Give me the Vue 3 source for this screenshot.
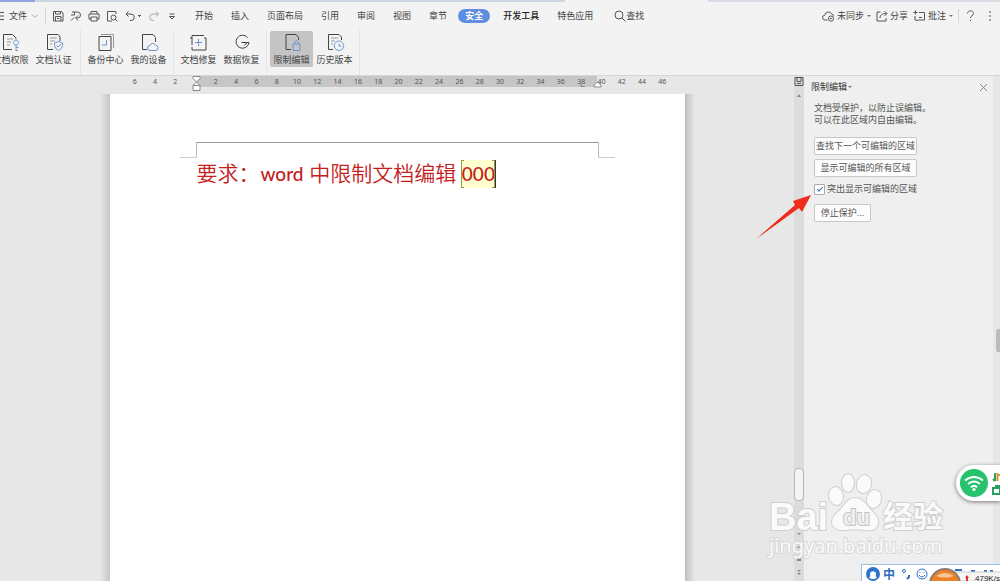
<template>
  <div class="app">
    <div class="tab-strip">
      <span class="tab-current"></span>
      <span class="tab-others"></span>
      <span class="tab-gap"></span>
      <span class="tab-rest"></span>
    </div>

    <header class="toolbar">
      <nav class="menu-bar">
        <button class="file-btn">
          <svg width="5" height="10" viewBox="0 0 5 10"><path d="M0 1.5h4M0 5h4M0 8.5h4" /></svg>
          <span>文件</span>
          <svg class="light" width="8" height="8" viewBox="0 0 8 8"><path d="M1 2.5l3 3 3-3" /></svg>
        </button>
        <div class="quick">
          <button v-for="q in quickIcons" :key="q.label" :aria-label="q.label" :class="{ light: q.light }">
            <svg :width="q.w" height="12" :viewBox="`0 0 ${q.w} 12`"><path :d="q.d" /></svg>
          </button>
        </div>
        <div class="tabs">
          <button
            v-for="tab in tabs"
            :key="tab"
            :class="{ active: tab === '安全', strong: tab === '开发工具' }"
          >{{ tab }}</button>
        </div>
        <button class="search">
          <svg width="12" height="12" viewBox="0 0 12 12"><circle cx="5" cy="5" r="4" /><path d="M8 8l3.5 3.5" /></svg>
          <span>查找</span>
        </button>
        <div class="account">
          <button>
            <svg width="13" height="12" viewBox="0 0 13 12">
              <path d="M5.5 10H3.2a2.4 2.4 0 0 1-.4-4.8A3.6 3.6 0 0 1 9.6 4a2.6 2.6 0 0 1 2 2.2" />
              <circle cx="9" cy="8.6" r="2.6" /><path d="M7.8 8.6h2.4" />
            </svg>
            <span>未同步</span><i class="caret"></i>
          </button>
          <button>
            <svg width="12" height="12" viewBox="0 0 12 12"><path d="M4.5 2H1v9h9V8M4 8c0-3 2-4.500 6.500-4.500M8.500 1l2.500 2.500-2.500 2.500" /></svg>
            <span>分享</span>
          </button>
          <button>
            <svg width="13" height="12" viewBox="0 0 13 12"><path d="M6 2.500h5.500v7.500H5.500L4 11l-.5-1H2V6M.5 2.500h4M2.500.5v4M6 7.500h3" /></svg>
            <span>批注</span><i class="caret"></i>
          </button>
          <span class="divider"></span>
          <button class="help" aria-label="帮助">
            <svg width="9" height="12" viewBox="0 0 9 12"><path d="M1.500 3.500C1.500 0 7.500 0 7.500 3.500c0 2-3 2.200-3 4.500M4.500 9.800v1.200" /></svg>
          </button>
          <button aria-label="更多">
            <svg width="4" height="12" viewBox="0 0 4 12"><path d="M2 1v2M2 5v2M2 9v2" /></svg>
          </button>
        </div>
      </nav>

      <div class="ribbon">
        <div v-for="(group, i) in ribbon" :key="i" class="ribbon-group">
          <button v-for="item in group" :key="item.label" :class="{ pressed: item.pressed }">
            <svg width="20" height="19" viewBox="0 0 20 19">
              <path v-if="item.thin" class="thin" :d="item.thin" />
              <path :d="item.dark" />
              <path class="blue" :d="item.blue" />
            </svg>
            <span>{{ item.label }}</span>
          </button>
        </div>
      </div>
    </header>

    <main class="workspace">
      <section class="document">
        <div class="ruler">
          <div class="ruler-band">
            <svg class="indent-left" width="9" height="16" viewBox="0 0 9 16">
              <path d="M1 .5h7v2L4.500 6 1 2.500zM4.500 6L8 9.500H1zM1 9.500h7v5H1z" />
            </svg>
            <svg class="indent-tab" width="5" height="5" viewBox="0 0 5 5"><path d="M1 0v3.500h4" /></svg>
            <svg class="indent-right" width="9" height="7" viewBox="0 0 9 7"><path d="M4.500 1L8 4v2H1V4z" /></svg>
          </div>
          <div class="ruler-ticks">
            <span v-for="(n, i) in ticks" :key="i">{{ n }}</span>
          </div>
        </div>
        <div class="sheet-wrap">
          <article class="sheet">
            <div class="margins">
              <span class="corner left"></span>
              <span class="line"></span>
              <span class="corner right"></span>
            </div>
            <p class="body-text">要求：<span class="latin">word</span> 中限制文档编辑 <mark class="latin">000</mark></p>
          </article>
        </div>
      </section>

      <div class="scrollbar">
        <svg width="10" height="12" viewBox="0 0 10 12"><path d="M1 1.500h8v8H1zM3 1.500v4h4v-4M3 7.500h4" /></svg>
        <i class="up"></i>
        <span class="thumb"></span>
        <svg class="jump" width="10" height="52" viewBox="0 0 10 52">
          <path d="M3 4h4l-2 2zM3 16l2-2 2 2zM3 19l2-2 2 2zM3 28h4v4H3zM3 41h4l-2 2zM3 44h4l-2 2z" />
        </svg>
      </div>

      <aside class="panel">
        <div class="panel-head">
          <span>限制编辑</span><i class="caret"></i>
          <button aria-label="关闭">
            <svg width="9" height="9" viewBox="0 0 9 9"><path d="M1 1l7 7M8 1l-7 7" /></svg>
          </button>
        </div>
        <p>文档受保护，以防止误编辑。<br />可以在此区域内自由编辑。</p>
        <button class="wide">查找下一个可编辑的区域</button>
        <button class="wide">显示可编辑的所有区域</button>
        <label for="highlight">
          <input id="highlight" v-model="highlight" type="checkbox" />
          <span>突出显示可编辑的区域</span>
        </label>
        <button class="stop">停止保护...</button>
        <svg class="pointer" width="58" height="46" viewBox="0 0 58 46">
          <path d="M1 45L40 11l-2-4L56 1l-9 17-3-4z" />
        </svg>
      </aside>
      <div class="edge"><span></span></div>
    </main>

    <svg class="watermark" width="184" height="90" viewBox="0 0 184 90">
      <text class="wm-bai" x="3" y="60">Bai</text>
      <ellipse cx="70" cy="26" rx="7" ry="9" transform="rotate(-12 70 26)" />
      <ellipse cx="82" cy="13" rx="6" ry="9" />
      <ellipse cx="98" cy="14" rx="7" ry="9" transform="rotate(12 98 14)" />
      <ellipse cx="108" cy="29" rx="7" ry="9" transform="rotate(15 108 29)" />
      <path d="M89 28c7 0 11 6 15 11 5 5 9 9 8 14-1 7-7 8-13 7-7-1-13-1-20 0-7 1-13-2-13-8 0-6 5-9 9-13 4-5 7-11 14-11z" />
      <text class="wm-du" x="77" y="55">du</text>
      <text class="wm-cjk" x="117" y="57">经验</text>
      <text class="wm-url" x="3" y="83">jingyan.baidu.com</text>
    </svg>

    <div class="wifi">
      <svg width="28" height="28" viewBox="0 0 28 28">
        <circle cx="14" cy="14" r="14" />
        <path d="M5 11.500q9-7 18 0M8 15q6-5 12 0M10.800 18.200q3.200-2.600 6.400 0" />
        <circle class="dot" cx="14" cy="20.500" r="1.600" />
      </svg>
      <svg width="8" height="26" viewBox="0 0 8 26">
        <path class="green" d="M3 3v8M1 9l2 2M1 18h7v6H1zM3 16h5" />
        <path class="orange" d="M5.500 3v8M5.500 5h3" />
      </svg>
    </div>

    <div class="ime">
      <svg width="140" height="16" viewBox="0 0 140 16">
        <circle class="solid" cx="11" cy="9" r="7" />
        <path class="face" d="M7 13q2-2 1-5a3.500 3.500 0 0 1 6 0q-1 3 1 5-4 2-8 0z" />
        <text class="ime-cn" x="21" y="14">中</text>
        <circle class="ring" cx="42" cy="6" r="1.500" />
        <path class="ring thick" d="M47 10v2l-2 2" />
        <circle class="ring" cx="60" cy="9" r="5" />
        <path class="ring" d="M58 7v1M62 7v1M57 10q3 4 6 0" />
        <path class="ring thick" d="M93 5h7M109 6h4M122 6h3M128 6h3" />
        <path class="tip" d="M84 7h56v9H84z" />
        <circle class="ball" cx="83" cy="19" r="15" />
        <path class="shine" d="M74 11q9-6 18 0-9 3-18 0z" />
        <path class="red" d="M105 10l-2 3h1v3h2v-3h1z" />
        <text class="speed" x="113" y="16">479K/s</text>
      </svg>
    </div>
  </div>
</template>

<script setup>
import { ref } from "vue";

const highlight = ref(true);

const tabs = ["开始", "插入", "页面布局", "引用", "审阅", "视图", "章节", "安全", "开发工具", "特色应用"];

const quickIcons = [
  { label: "保存", w: 12, d: "M1.500 1.500h8l1.500 1.500v8H1.500zM3.500 1.500v2.500h5V1.500M3.500 11V6.500h5.500V11M5 8.500h2.500" },
  { label: "输出", w: 12, d: "M2 2h5.500a2.500 2.500 0 0 1 0 6H6M8 5.500L5.500 8 8 10.500M1 5h3.500V2M1 10.500l3-3" },
  { label: "打印", w: 12, d: "M3 4V1.500h6V4M3 9H1V4h10v5H9M3 7h6v4H3z" },
  { label: "打印预览", w: 12, d: "M10 4V1.500H1.500V11H6M10.500 10.500L9.300 9.200M10 7.500a2.500 2.500 0 1 1-5 0 2.500 2.500 0 0 1 5 0M11.500 11.500L9.500 9.500" },
  { label: "撤销", w: 18, d: "M4.500 1.500L2 4l2.500 2.500M2 4h5a3 3 0 0 1 0 6.500H6M14 5.500h3M15 6.500h1" },
  { label: "恢复", w: 12, light: true, d: "M8 1.500L10.500 4 8 6.500M10.500 4H5a3 3 0 0 0 0 6.500h1" },
  { label: "自定义", w: 12, d: "M3.500 4h5M3.500 6.500h5L6 9z" },
];

const ribbon = [
  [
    { label: "文档权限", thin: "M6 6h6M6 9h4M6 12h3", dark: "M11 16.500H2.500v-15h9L15 5v1", blue: "M15 7a2.500 2.500 0 1 0 .1 0M15 12v6M15 14.500h2.500M15 17.500h2" },
    { label: "文档认证", thin: "M6 5h7M6 8h5M6 11h2", dark: "M9 16.500H3.500v-15H14L16 4v4", blue: "M14.500 8.500l4 1.500v2.500q0 3-4 5-4-2-4-5V10zM12.500 12.500l1.500 1.500 3-3" },
  ],
  [
    { label: "备份中心", thin: "M5 1.500h12.500V15", dark: "M3 3.500h12v14H3z", blue: "M10.500 7v5H6" },
    { label: "我的设备", dark: "M8 16.500H3.500v-15H14l2.500 3V9", blue: "M11 17.500a2.500 2.500 0 0 1 0-5 3 3 0 0 1 5.500-.5 2.800 2.800 0 0 1 .5 5.500z" },
  ],
  [
    { label: "文档修复", dark: "M3 12V2.500h12M17 5v12M17 5h-2M3 14v3h12M1 5h2M17 17h-2", blue: "M9.500 6v7M6 9.500h7" },
    { label: "数据恢复", dark: "M15.500 4.500A6.500 6.500 0 1 0 17 9.500H9.500M10 9.500h5l-2.500 3" },
  ],
  [
    { label: "限制编辑", pressed: true, dark: "M9 16.500H4v-15h10l2.500 3V7", blue: "M11 11h7v6.500h-7zM12.500 11V9q2-3 4 0v2" },
    { label: "历史版本", thin: "M6 5h7M6 8h4M6 11h2", dark: "M8 16.500H3.500v-15H14L16.500 4v3", blue: "M14 8a4.700 4.700 0 1 0 .1 0M14 10.500V13h2.500" },
  ],
];

// left side counts down to the page margin, then the text area counts up
const ticks = [6, 4, 2, ""];
for (let n = 2; n <= 46; n += 2) ticks.push(n);
</script>

<style>
body {
  margin: 0;
}
</style>

<style scoped>
.app {
  position: relative;
  display: flex;
  flex-direction: column;
  min-height: 100vh;
  overflow: hidden;
  background: #e7e7e7;
  color: #444;
  font: 9px/12px "Liberation Sans", "Noto Sans CJK SC", sans-serif;
}

button {
  padding: 0;
  border: 0;
  background: none;
  color: inherit;
  font: inherit;
  white-space: nowrap;
}

svg {
  flex: none;
  fill: none;
  stroke: #555;
}

.light,
.light svg {
  stroke: #aaa;
}

.tab-strip {
  display: flex;
  height: 2px;
  background: #f3f3f3;
}

.tab-current {
  flex: 35;
  background: #8fa5df;
}

.tab-others {
  flex: 530;
  background: #cfd6e1;
}

.tab-gap {
  flex: 143;
}

.tab-rest {
  flex: 292;
  background: #d8dde7;
}

.toolbar {
  background: #f3f3f3;
  border-bottom: 1px solid #d6d6d6;
}

.menu-bar {
  display: flex;
  align-items: center;
  height: 28px;
}

.menu-bar button {
  display: flex;
  align-items: center;
}

.file-btn {
  gap: 4px;
  height: 18px;
  padding-right: 6px;
  border-right: 1px solid #d5d5d5;
}

.quick {
  display: flex;
  gap: 6px;
  margin-left: 6px;
}

.tabs {
  display: flex;
  gap: 4px;
  margin-left: 10px;
}

.menu-bar .tabs button {
  height: 14px;
  padding: 0 7px;
  border-radius: 7px;
}

.menu-bar .tabs .active {
  margin-right: 2px;
  background: #5f8ee0;
  color: #fff;
  font-weight: bold;
}

.tabs .strong {
  color: #222;
  font-weight: 500;
}

.search {
  margin-left: 14px;
}

.account {
  display: flex;
  align-items: center;
  gap: 5px;
  margin-left: auto;
  padding-right: 8px;
}

.account button {
  gap: 2px;
}

.divider {
  width: 1px;
  height: 14px;
  background: #d5d5d5;
}

.help {
  margin: 0 8px 0 2px;
}

.caret {
  width: 0;
  margin-left: 1px;
  border: 2px solid transparent;
  border-top-color: #777;
  border-bottom: 0;
}

.ribbon {
  display: flex;
  height: 45px;
  margin-left: -14px;
}

.ribbon-group {
  display: flex;
  align-items: flex-start;
  padding: 0 3px;
  border-right: 1px solid #e4e4e4;
}

.ribbon-group:first-child {
  padding-right: 5px;
}

.ribbon-group button {
  display: flex;
  flex-direction: column;
  align-items: center;
  gap: 2px;
  width: 43px;
  margin-top: 1px;
  padding: 2px 0 1px;
  border-radius: 2px;
}

.ribbon-group .pressed {
  background: #c4c4c4;
}

.ribbon svg {
  stroke: #444;
}

.ribbon .thin {
  stroke: #999;
}

.ribbon .blue {
  stroke: #6b95cf;
}

.workspace {
  display: flex;
  flex: 1;
}

.document {
  display: flex;
  flex: 1;
  flex-direction: column;
}

.ruler {
  display: grid;
  justify-items: center;
  height: 18px;
}

.ruler > * {
  grid-area: 1 / 1;
}

.ruler-band {
  position: relative;
  width: 400px;
  height: 11px;
  background: #c6c6c6;
}

.ruler-band svg {
  position: absolute;
  stroke: #888;
}

.indent-left {
  top: 0;
  left: -5px;
  fill: #fff;
}

.indent-tab {
  right: 12px;
  bottom: -1px;
}

.indent-right {
  right: -5px;
  bottom: -1px;
  fill: #fff;
}

.ruler-ticks {
  position: relative;
  display: grid;
  grid-template-columns: repeat(27, 1fr);
  width: 548px;
  padding-left: 3px;
  color: #555;
  font: 7px/11px "Noto Sans", sans-serif;
  text-align: center;
}

.sheet-wrap {
  display: flex;
  flex: 1;
  justify-content: center;
}

.sheet-wrap::before,
.sheet-wrap::after {
  width: 10px;
  background: linear-gradient(to left, #c6c6c6, #e7e7e7);
  content: "";
}

.sheet-wrap::after {
  background: linear-gradient(to right, #c0c0c0, #e7e7e7);
}

.sheet {
  box-sizing: border-box;
  width: 575px;
  padding: 48px 70px 0;
  background: #fff;
}

.margins {
  display: flex;
  height: 16px;
}

.corner {
  box-sizing: border-box;
  width: 17px;
  border-bottom: 1px solid #ccc;
}

.corner.left {
  border-right: 1px solid #bbb;
}

.corner.right {
  border-left: 1px solid #bbb;
}

.line {
  flex: 1;
  border-top: 1px solid #999;
}

.body-text {
  margin: 0 17px;
  color: #c4201c;
  font: 21px/28px "Noto Sans CJK SC", sans-serif;
  font-weight: 350;
  white-space: nowrap;
}

.latin {
  margin: 0 1px;
  font-family: Lato, sans-serif;
  font-size: 19px;
  font-weight: 500;
}

mark {
  position: relative;
  display: inline-block;
  background: #ffffcf;
  box-shadow: 1px 0 #335;
  color: #c4201c;
  line-height: 28px;
}

mark::before,
mark::after {
  position: absolute;
  top: 0;
  bottom: 0;
  width: 2px;
  border: 1px solid #9a9a35;
  content: "";
}

mark::before {
  left: -1px;
  border-right: 0;
}

mark::after {
  right: 0;
  border-left: 0;
}

.scrollbar {
  display: flex;
  flex-direction: column;
  align-items: center;
  width: 10px;
  background: #dcdcdc;
}

.up {
  margin-top: 6px;
  border: 2px solid transparent;
  border-top: 0;
  border-bottom: 3px solid #888;
}

.thumb {
  box-sizing: border-box;
  width: 10px;
  height: 33px;
  margin-top: auto;
  border: 1px solid #b5b5b5;
  border-radius: 4px;
  background: #f4f4f4;
}

.jump {
  margin-top: 28px;
  fill: #888;
  stroke: none;
}

.panel {
  position: relative;
  display: flex;
  flex-direction: column;
  align-items: flex-start;
  width: 179px;
  padding-left: 10px;
  background: #efefef;
  color: #555;
}

.panel-head {
  display: flex;
  align-items: center;
  align-self: stretch;
  height: 22px;
  margin-left: -3px;
  color: #333;
}

.panel-head button {
  display: flex;
  margin-left: auto;
  padding-right: 5px;
}

.panel-head svg {
  stroke: #888;
}

.panel p {
  margin: 4px 0 11px;
}

.wide,
.stop {
  box-sizing: border-box;
  width: 103px;
  height: 18px;
  margin-bottom: 4px;
  border: 1px solid #c8c8c8;
  border-radius: 2px;
  background: #fdfdfd;
}

.stop {
  width: 57px;
  margin: 0;
}

.panel label {
  display: flex;
  align-items: center;
  gap: 2px;
  margin: 2px 0 9px;
}

.panel input {
  display: grid;
  place-content: center;
  box-sizing: border-box;
  width: 11px;
  height: 11px;
  margin: 0;
  border: 1px solid #aaa;
  border-radius: 1px;
  background: #fff;
  appearance: none;
}

.panel input:checked::before {
  width: 5px;
  height: 2px;
  margin-bottom: 2px;
  border: solid #3f6bb5;
  border-width: 0 0 1px 1px;
  content: "";
  transform: rotate(-45deg);
}

.pointer {
  position: absolute;
  top: 118px;
  left: -49px;
  fill: #ee2b1c;
  stroke: none;
}

.edge {
  display: flex;
  justify-content: flex-end;
  width: 7px;
}

.edge span {
  width: 4px;
  height: 23px;
  margin-top: 253px;
  border-radius: 2px 0 0 2px;
  background: #bbb;
}

.watermark {
  position: absolute;
  right: 50px;
  bottom: 21px;
  fill: #fafafa;
  stroke: #cfcfcf;
  paint-order: stroke;
  stroke-width: 2px;
}

.wm-bai {
  font: bold 38px "Liberation Sans", sans-serif;
}

.wm-du {
  fill: #efefef;
  stroke: #c4c4c4;
  font: bold 22px "Liberation Sans", sans-serif;
}

.wm-cjk {
  font: bold 30px "Noto Sans CJK SC", sans-serif;
}

.wm-url {
  stroke: #d8d8d8;
  font: 20px "Noto Sans", sans-serif;
}

.wifi {
  position: absolute;
  right: 0;
  bottom: 80px;
  display: flex;
  align-items: center;
  gap: 4px;
  height: 36px;
  padding-left: 4px;
  border-radius: 18px 0 0 18px;
  background: #fff;
  box-shadow: 0 1px 4px rgba(0, 0, 0, 0.5);
}

.wifi circle {
  fill: #27c26c;
  stroke: none;
}

.wifi path {
  stroke: #fff;
  stroke-width: 2px;
}

.wifi .dot {
  fill: #fff;
}

.wifi .green {
  stroke: #27a060;
}

.wifi .orange {
  stroke: #d9962e;
}

.ime {
  position: absolute;
  right: 0;
  bottom: 0;
  display: flex;
  width: 138px;
  overflow: hidden;
  border-top: 1px solid #9cc0e4;
  border-left: 1px solid #9cc0e4;
  background: #fff;
}

.ime .solid {
  fill: #2d75cc;
  stroke: none;
}

.ime .face {
  fill: #fff;
  stroke: none;
}

.ime .ring {
  stroke: #2d6fbd;
}

.ime .thick {
  stroke-width: 2px;
}

.ime-cn {
  fill: #2d6fbd;
  stroke: none;
  font: bold 12px "Noto Sans CJK SC", sans-serif;
}

.ime .tip {
  fill: #f6f6f6;
  stroke: #ccc;
}

.ime .ball {
  fill: #ed8128;
  stroke: #8d7a70;
  stroke-width: 2px;
}

.ime .shine {
  fill: #f9c59a;
  stroke: none;
}

.ime .red {
  fill: #d33;
  stroke: none;
}

.speed {
  fill: #222;
  stroke: none;
  font: 8px "Liberation Sans", sans-serif;
}
</style>
